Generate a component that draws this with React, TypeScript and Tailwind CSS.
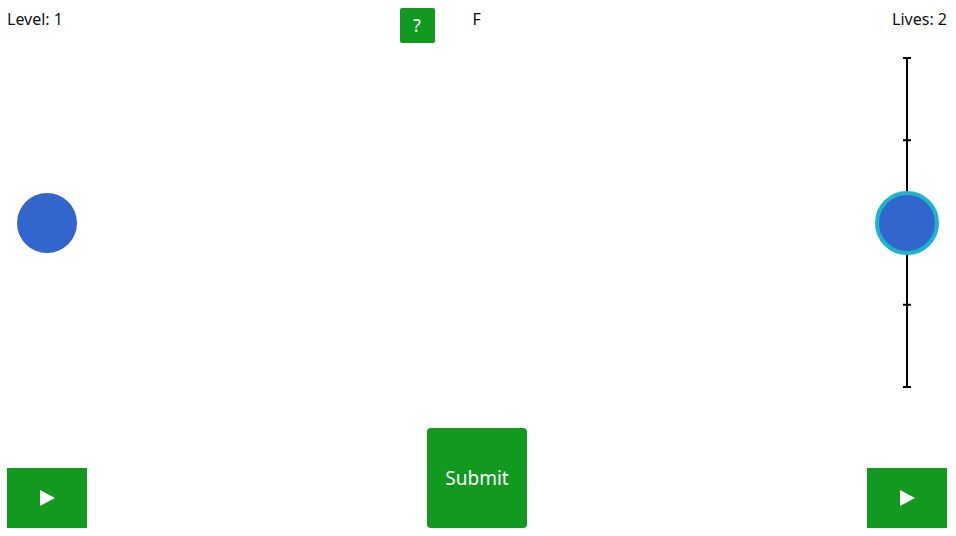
const font = { fontFamily: '"Noto Sans", "Open Sans", sans-serif' };

function PlayButton() {
  return (
    <button className="w-[80px] h-[60px] bg-[#119920] flex items-center justify-center">
      <svg width="15" height="16" viewBox="0 0 15 16">
        <polygon points="0,0 15,8 0,16" fill="#ffffff" />
      </svg>
    </button>
  );
}

function Slider() {
  const ticks = [0, 82.25, 246.75, 329];
  return (
    <div className="relative w-[64px] h-[331px]">
      <svg width="64" height="331" viewBox="0 0 64 331" className="block">
        <line x1="32" y1="1" x2="32" y2="330" stroke="#000" strokeWidth="2" />
        {ticks.map((t) => (
          <line key={t} x1="28" y1={t + 1} x2="36" y2={t + 1} stroke="#000" strokeWidth="2" />
        ))}
      </svg>
      {/* thumb */}
      <div className="absolute left-0 top-[134px] w-[64px] h-[64px] rounded-full bg-[#3366cc] border-[4px] border-[#1ab7cb]" />
    </div>
  );
}

export default function App() {
  return (
    <div className="h-[536px] w-[956px] bg-white text-[#111] flex flex-col pl-[7px] pr-[9px] pb-[8px]" style={font}>
      <div className="flex items-start pt-[8px]">
        <div className="flex-1 text-[16px] leading-[20px] pt-[1px]">Level: 1</div>
        <div className="flex items-start gap-[38px]">
          <button className="w-[35px] h-[35px] rounded-[2px] bg-[#119920] text-white text-[18px] leading-[35px] text-center">
            ?
          </button>
          <span className="text-[16px] leading-[20px] pt-[1px] w-[9px]">F</span>
          <span className="w-[35px]" />
        </div>
        <div className="flex-1 text-right text-[16px] leading-[20px] pt-[1px]">Lives: 2</div>
      </div>

      <div className="mt-[14px] flex items-center justify-between">
        <div className="ml-[10px] w-[60px] h-[60px] rounded-full bg-[#3366cc]" />
        <div className="mr-[8px]">
          <Slider />
        </div>
      </div>

      <div className="mt-auto flex items-end justify-between">
        <PlayButton />
        <button className="w-[100px] h-[100px] rounded-[4px] bg-[#119920] text-white text-[19px]">
          Submit
        </button>
        <PlayButton />
      </div>
    </div>
  );
}
